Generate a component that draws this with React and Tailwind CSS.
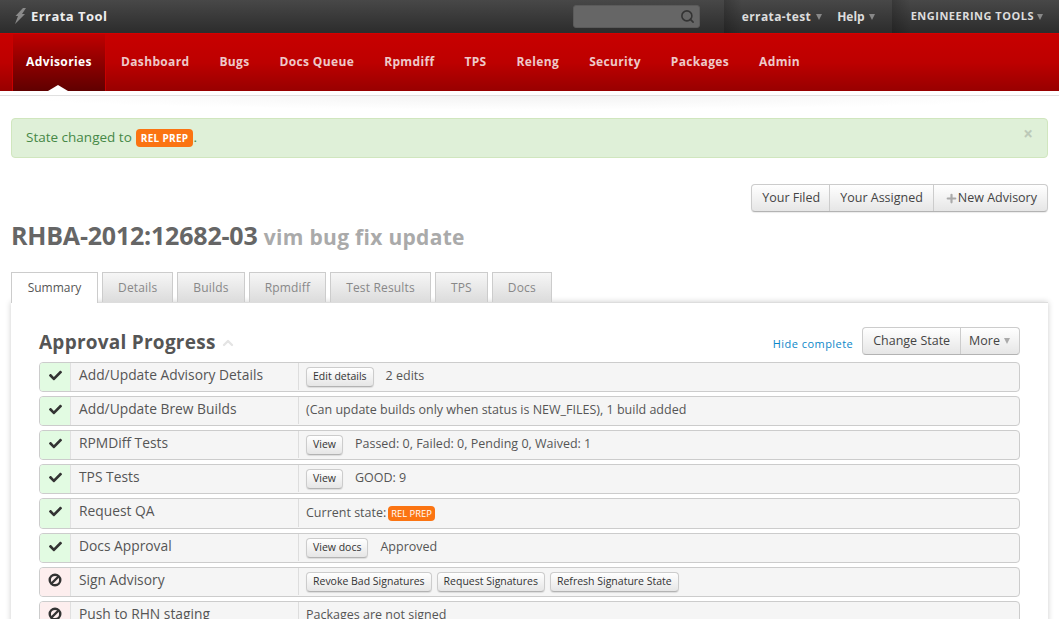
import { Search, Plus, ChevronUp } from "lucide-react";
import { FaCheck } from "react-icons/fa";

const navItems = ["Dashboard", "Bugs", "Docs Queue", "Rpmdiff", "TPS", "Releng", "Security", "Packages", "Admin"];
const tabs = ["Details", "Builds", "Rpmdiff", "Test Results", "TPS", "Docs"];

const Caret = ({ className = "border-t-[#888]" }) => (
  <span className={`inline-block w-0 h-0 border-x-[3.5px] border-x-transparent border-t-[6px] ${className}`} />
);

const BanIcon = () => (
  <svg width="14" height="14" viewBox="0 0 14 14" className="-mt-[1px]">
    <circle cx="7" cy="7" r="5.3" fill="none" stroke="#333" strokeWidth="2.4" />
    <path d="M3.5 10.5 L10.5 3.5" stroke="#333" strokeWidth="2.4" />
  </svg>
);

const SmallBtn = ({ children }) => (
  <span className="h-[20px] px-[6px] flex items-center text-[10.5px] text-[#333] bg-gradient-to-b from-white to-[#e6e6e6] border border-[#ccc] border-b-[#b3b3b3] rounded-[4px] shadow-[0_1px_1px_rgba(0,0,0,0.1)]">
    {children}
  </span>
);

const Badge = ({ small }) => (
  <span
    className={
      small
        ? "inline-block h-[15px] leading-[15px] px-[3px] text-[9.4px] text-white bg-[#fb7412] rounded-[4px] font-medium"
        : "inline-block h-[18px] leading-[18px] px-[5px] text-[10px] text-white bg-[#fb7412] rounded-[4px] font-bold tracking-[0.3px]"
    }
  >
    REL PREP
  </span>
);

const Row = ({ ok = true, title, h = 30, children }) => (
  <div
    className="flex border border-[#ccc] rounded-[4px] bg-[#f5f5f5] overflow-hidden mb-[4px] shrink-0"
    style={{ height: h }}
  >
    <div className={`w-[31px] flex justify-center pt-[6px] border-r border-[#e0e0e0] ${ok ? "bg-[#e2fbe2]" : "bg-[#fdeeee]"}`}>
      {ok ? <FaCheck size={13} className="text-[#333]" /> : <BanIcon />}
    </div>
    <div className="w-[227px] pl-[8px] pt-[2px] text-[13.8px] leading-[20px] text-[#555]">{title}</div>
    <div className="flex-1 flex items-center gap-[5px] pl-[7px] mb-[1px] border-l border-[#ddd] text-[12.5px] text-[#555]">
      {children}
    </div>
  </div>
);

export default function App() {
  return (
    <div className="h-[619px] overflow-hidden bg-white font-['Open_Sans',sans-serif]">
      <div className="h-[33px] flex items-center bg-gradient-to-b from-[#484848] to-[#2c2c2c]">
        <svg width="12" height="16" viewBox="0 0 12 16" className="ml-[14px] mr-[5px] mb-[1px]">
          <path d="M9 0 L12 0 L8 6 L11 6 L1 16 L4 8 L1.5 8 Z" fill="#8a8a8a" />
        </svg>
        <span className="text-[13px] font-bold text-[#eee] tracking-[0.45px]">Errata Tool</span>
        <div className="ml-auto w-[127px] h-[23px] mr-[24px] flex items-center justify-end pr-[4px] bg-[#666] border border-[#5a5a5a] rounded-[3px]">
          <Search size={15} strokeWidth={2.5} className="text-[#333]" />
        </div>
        <div className="h-[33px] w-[18px] bg-gradient-to-r from-black/20 to-transparent" />
        <span className="text-[12px] font-bold text-[#ddd] mr-[5px] tracking-[0.4px]">errata-test</span>
        <Caret />
        <span className="text-[12px] font-bold text-[#ddd] ml-[15px] mr-[4px]">Help</span>
        <Caret />
        <div className="h-[33px] w-[19px] ml-[17px] bg-gradient-to-r from-black/20 to-transparent" />
        <span className="text-[11px] font-bold text-[#ddd] mr-[3px] tracking-[0.5px]">ENGINEERING TOOLS</span>
        <Caret />
        <div className="w-[16px]" />
      </div>

      <div className="h-[58px] flex pl-[12px] bg-gradient-to-b from-[#c80000] via-[#bd0000] to-[#980000] border-t border-[#d40000]">
        <div className="relative w-[94px] flex items-center justify-center pb-[2px] text-[12px] font-bold tracking-[0.4px] text-white border-x border-[#c80000] bg-gradient-to-b from-[#c00000] to-[#600000]">
          Advisories
          <span className="absolute bottom-0 left-[35px] w-0 h-0 border-x-[10px] border-x-transparent border-b-[6px] border-b-white" />
        </div>
        {navItems.map((item) => (
          <div key={item} className="mx-[15px] pb-[2px] flex items-center text-[12px] font-bold tracking-[0.35px] text-[#eec9c9]">
            {item}
          </div>
        ))}
      </div>

      <div className="h-[27px] pt-[4px]">
        <div className="h-[1px] bg-[#e0e0e0]" />
        <div className="h-[14px] bg-[radial-gradient(ellipse_at_top,#f3f3f3,white_70%)]" />
      </div>

      <div className="mx-[11px] h-[40px] relative flex items-center pl-[14px] pb-[2px] bg-[#dff0d8] border border-[#d0e6be] rounded-[4px] text-[13.5px] text-[#468847]">
        <span>State changed to</span>
        <span className="ml-[4px]"><Badge /></span>
        <span>.</span>
        <span className="absolute right-[14px] top-[5px] text-[17px] leading-[20px] font-bold text-[#bcc9b8]">×</span>
      </div>

      <div className="mt-[26px] mx-[11px] flex justify-end">
        <div className="h-[28px] flex items-center text-[12.5px] text-[#444] bg-gradient-to-b from-white to-[#e6e6e6] border border-[#ccc] border-b-[#b3b3b3] rounded-[4px] shadow-[0_1px_1px_rgba(0,0,0,0.08)]">
          <span className="pl-[10px] pr-[9px] leading-[26px] border-r border-[#ccc]">Your Filed</span>
          <span className="px-[10px] leading-[26px] border-r border-[#ccc]">Your Assigned</span>
          <span className="pl-[11px] pr-[10px] leading-[26px] flex items-center">
            <Plus size={13} strokeWidth={4} className="text-[#aaa]" />
            New Advisory
          </span>
        </div>
      </div>

      <h1 className="mt-[6px] mx-[11px] h-[34px] leading-[34px] text-[25px] font-bold text-[#666] tracking-[-0.2px]">
        RHBA-2012:12682-03 <span className="text-[#aaa] text-[21px] tracking-[0.3px]">vim bug fix update</span>
      </h1>

      <div className="mt-[20px] ml-[11px] h-[31px] flex relative z-10">
        <div className="h-[31px] w-[87px] flex items-center justify-center text-[12px] text-[#555] bg-white border border-[#ccc] border-b-0">
          Summary
        </div>
        {tabs.map((t) => (
          <div
            key={t}
            className="ml-[4px] h-[30px] px-[15px] flex items-center text-[12px] tracking-[0.17px] text-[#888] bg-gradient-to-b from-[#f6f6f6] to-[#dcdcdc] border border-[#ccc] border-b-0"
          >
            {t}
          </div>
        ))}
      </div>

      <div className="mx-[11px] -mt-[1px] h-[330px] bg-white border-t border-[#ddd] shadow-[0_0_6px_rgba(0,0,0,0.2)] px-[28px]">
        <div className="h-[59px] flex">
          <div className="pt-[26px] text-[19px] leading-[26px] font-bold text-[#555] tracking-[0.25px] flex items-start">
            Approval Progress
            <ChevronUp size={16} strokeWidth={3.5} className="text-[#e4e4e4] ml-[4px] mt-[6px]" />
          </div>
          <div className="ml-auto flex items-start pt-[24px]">
            <span className="mt-[9px] mr-[9px] text-[11px] leading-[16px] text-[#0a87c9] tracking-[0.45px]">Hide complete</span>
            <div className="h-[28px] flex items-center text-[12.5px] text-[#444] bg-gradient-to-b from-white to-[#e6e6e6] border border-[#ccc] border-b-[#b3b3b3] rounded-[4px]">
              <span className="px-[10px] leading-[26px] border-r border-[#ccc]">Change State</span>
              <span className="pl-[8px] pr-[9px] flex items-center gap-[4px]">
                More <Caret className="border-t-[#aaa]" />
              </span>
            </div>
          </div>
        </div>
        <div className="flex flex-col">
          <Row title="Add/Update Advisory Details">
            <SmallBtn>Edit details</SmallBtn>
            <span className="ml-[7px]">2 edits</span>
          </Row>
          <Row title="Add/Update Brew Builds">(Can update builds only when status is NEW_FILES), 1 build added</Row>
          <Row title="RPMDiff Tests">
            <SmallBtn>View</SmallBtn>
            <span className="ml-[7px]">Passed: 0, Failed: 0, Pending 0, Waived: 1</span>
          </Row>
          <Row title="TPS Tests">
            <SmallBtn>View</SmallBtn>
            <span className="ml-[7px]">GOOD: 9</span>
          </Row>
          <Row title="Request QA" h={31}>
            <span>Current state:</span>
            <span className="-ml-[3px]"><Badge small /></span>
          </Row>
          <Row title="Docs Approval">
            <SmallBtn>View docs</SmallBtn>
            <span className="ml-[7px]">Approved</span>
          </Row>
          <Row ok={false} title="Sign Advisory">
            <SmallBtn>Revoke Bad Signatures</SmallBtn>
            <SmallBtn>Request Signatures</SmallBtn>
            <SmallBtn>Refresh Signature State</SmallBtn>
          </Row>
          <Row ok={false} title="Push to RHN staging">Packages are not signed</Row>
        </div>
      </div>
    </div>
  );
}
